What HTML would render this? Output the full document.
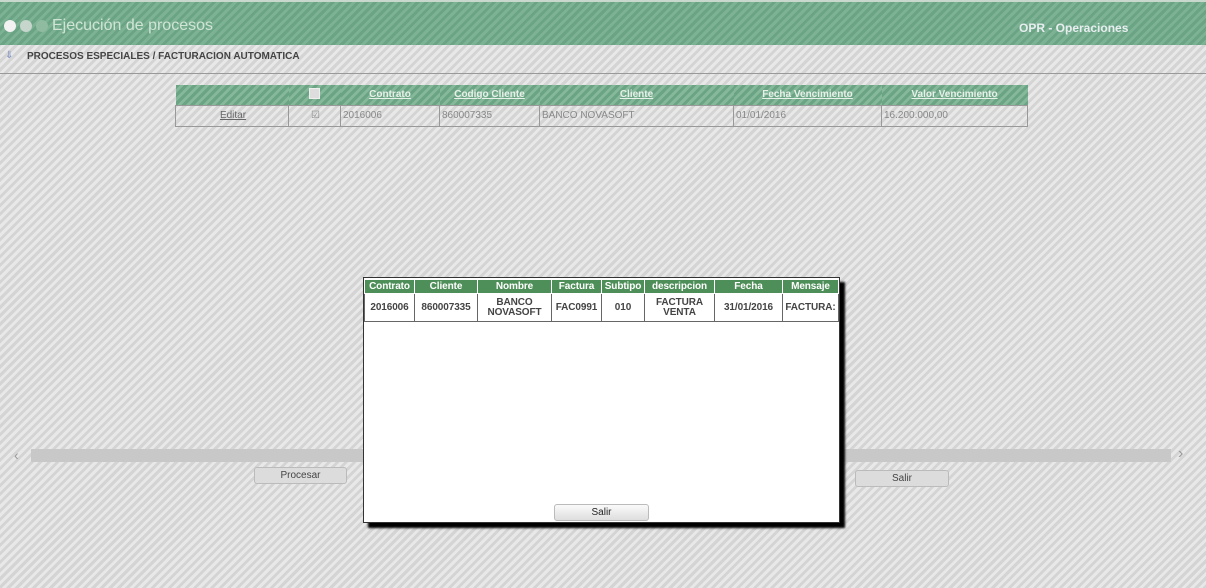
<!DOCTYPE html>
<html><head><meta charset="utf-8"><style>
*{margin:0;padding:0;box-sizing:border-box}
body{width:1206px;height:588px;overflow:hidden;position:relative;font-family:"Liberation Sans",Verdana,sans-serif;
background:repeating-linear-gradient(135deg,#d4d4d4 0 3px,#e8e8e8 3px 6px);}
.hdr{position:absolute;left:0;top:0;width:1206px;height:45px;background:repeating-linear-gradient(135deg,#6aa485 0 3px,#7db394 3px 6px);border-top:2px solid #c8d8cc}
.dot{position:absolute;top:18px;width:12px;height:12px;border-radius:50%}
.title{position:absolute;left:52px;top:15px;font-size:16px;color:#d0e4d6}
.opr{position:absolute;left:1019px;top:19px;font-size:12px;color:#e8eef0;font-weight:bold}
.crumb{position:absolute;left:27px;top:51px;font-size:10px;font-weight:bold;color:#444}
.line{position:absolute;left:0;top:73px;width:1206px;height:1px;background:#999}
table{border-collapse:collapse}
.t1{position:absolute;left:175px;top:85px;width:853px;font-size:10px;color:#888}
.t1 th{height:20px;background:repeating-linear-gradient(135deg,#6aa485 0 3px,#85b99a 3px 6px);color:#e8f0ea;text-decoration:underline;font-weight:bold}
.t1 td{height:21px;border:1px solid #999;padding-left:2px}
.modal{position:absolute;left:363px;top:277px;width:477px;height:246px;background:#fff;border:1px solid #333;box-shadow:5px 5px 2px #000}
.t2{table-layout:fixed;width:474px;font-size:10px;font-weight:bold;color:#444;font-family:"Liberation Sans",sans-serif;margin:1px 0 0 0;letter-spacing:-0.1px}
.t2 th{background:#4e8e58;color:#fff;height:14px;border:1px solid #fff;padding:0;overflow:hidden;white-space:nowrap}
.t2 td{border:1px solid #666;text-align:center;padding:0;height:28px;line-height:10px;overflow:hidden;white-space:nowrap}
.btn{position:absolute;height:17px;font-size:10px;color:#444;text-align:center;line-height:16px;border:1px solid #bbb;border-radius:3px}
.scroll{position:absolute;left:31px;top:449px;width:1140px;height:13px;background:#c8c8c8}
</style></head><body>
<div class="hdr">
<div class="dot" style="left:4px;background:#f2f2f2"></div>
<div class="dot" style="left:20px;background:#c6d6cc"></div>
<div class="dot" style="left:36px;background:#8fbba0"></div>
<div class="title">Ejecución de procesos</div>
<div class="opr">OPR - Operaciones</div>
</div>
<div style="position:absolute;left:5px;top:50px;font-size:10px;color:#7a8ac0">⇓</div>
<div class="crumb">PROCESOS ESPECIALES / FACTURACION AUTOMATICA</div>
<div class="line"></div>
<table class="t1">
<tr><th style="width:113px"></th><th style="width:52px"><span style="display:inline-block;width:11px;height:11px;background:#ddd;border:1px solid #eee"></span></th><th style="width:99px">Contrato</th><th style="width:100px">Codigo Cliente</th><th style="width:194px">Cliente</th><th style="width:148px">Fecha Vencimiento</th><th>Valor Vencimiento</th></tr>
<tr><td style="text-align:center;text-decoration:underline;color:#666">Editar</td><td style="text-align:center">☑</td><td>2016006</td><td>860007335</td><td>BANCO NOVASOFT</td><td>01/01/2016</td><td>16.200.000,00</td></tr>
</table>
<div class="scroll"></div>
<div style="position:absolute;left:14px;top:447px;color:#999;font-size:14px">‹</div>
<div style="position:absolute;left:1178px;top:445px;color:#999;font-size:16px">›</div>
<div class="btn" style="left:254px;top:467px;width:93px;background:#dcdcdc">Procesar</div>
<div class="btn" style="left:855px;top:470px;width:94px;background:#dcdcdc">Salir</div>
<div class="modal">
<table class="t2">
<colgroup><col style="width:50px"><col style="width:63px"><col style="width:74px"><col style="width:50px"><col style="width:43px"><col style="width:70px"><col style="width:68px"><col style="width:56px"></colgroup>
<tr><th>Contrato</th><th>Cliente</th><th>Nombre</th><th>Factura</th><th>Subtipo</th><th>descripcion</th><th>Fecha</th><th>Mensaje</th></tr>
<tr><td>2016006</td><td>860007335</td><td>BANCO<br>NOVASOFT</td><td>FAC0991</td><td>010</td><td>FACTURA<br>VENTA</td><td>31/01/2016</td><td>FACTURA:</td></tr>
</table>
<div class="btn" style="left:190px;top:226px;width:95px;background:linear-gradient(#fafafa,#dedede);color:#222">Salir</div>
</div>
</body></html>
